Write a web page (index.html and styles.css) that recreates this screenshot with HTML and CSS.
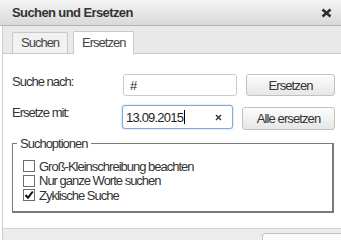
FILE: index.html
```html
<!DOCTYPE html>
<html lang="de">

<head>
  <meta charset="UTF-8">
  <title>Suchen und Ersetzen</title>
  <link rel="stylesheet" href="styles.css">
</head>

<body>

  <div class="dialog">
    <div class="titlebar">
      <span class="title">Suchen und Ersetzen</span>
      <svg class="close" width="11" height="10" viewBox="0 0 11 10">
        <path d="M1.5 1.5 L9.5 8.5 M9.5 1.5 L1.5 8.5" stroke="#2e2e2e" stroke-width="2.6" />
      </svg>
    </div>

    <div class="body">
      <div class="tabs">
        <div class="tab">Suchen</div>
        <div class="tab active">Ersetzen</div>
      </div>

      <div class="content">
        <div class="row">
          <label class="label label-search">Suche nach:</label>
          <div class="field field-search"><span class="value">#</span></div>
          <button class="btn btn-replace">Ersetzen</button>
        </div>

        <div class="row row-second">
          <label class="label label-replace">Ersetze mit:</label>
          <div class="field field-replace focused">
            <span class="value">13.09.2015</span><span class="caret"></span>
            <svg class="clear" width="7" height="7" viewBox="0 0 7 7">
              <path d="M1 1 L6 6 M6 1 L1 6" stroke="#333" stroke-width="1.4" />
            </svg>
          </div>
          <button class="btn btn-all">Alle ersetzen</button>
        </div>

        <fieldset class="options">
          <legend>Suchoptionen</legend>
          <div class="option"><span class="box"></span>Groß-Kleinschreibung beachten</div>
          <div class="option"><span class="box"></span>Nur ganze Worte suchen</div>
          <div class="option">
            <span class="box">
              <svg width="10" height="10" viewBox="0 0 10 10">
                <path d="M1.5 5 L4 7.8 L8.8 1.5" stroke="#111" stroke-width="2" fill="none" />
              </svg>
            </span>Zyklische Suche
          </div>
        </fieldset>
      </div>

      <div class="footer">
        <button class="btn footer-btn"></button>
      </div>
    </div>
  </div>

</body>

</html>
```

FILE: styles.css
```css
* {
  box-sizing: border-box;
  margin: 0;
  padding: 0;
}

body {
  font-family: "Liberation Sans", Arial, sans-serif;
  font-size: 13px;
  line-height: 15px;
  color: #333;
  background: #fff;
  width: 341px;
  height: 240px;
  overflow: hidden;
}

.dialog {
  width: 341px;
  height: 240px;
  display: flex;
  flex-direction: column;
}

.titlebar {
  flex: none;
  height: 26px;
  display: flex;
  align-items: center;
  justify-content: space-between;
  padding: 0 9px 0 12px;
  background: linear-gradient(#f4f4f4, #d9d9d9);
  border-bottom: 1px solid #b3b3b3;
}

.title {
  font-weight: bold;
  letter-spacing: -0.6px;
}

.body {
  flex: 1;
  display: flex;
  flex-direction: column;
  margin-left: 2px;
  border-left: 1px solid #cdcdcd;
}

.tabs {
  flex: none;
  height: 28px;
  display: flex;
  align-items: flex-end;
  gap: 5px;
  padding-left: 9px;
  background: #e9e9e9;
  border-bottom: 1px solid #c8c8c8;
}

.tab {
  height: 21px;
  padding: 2px 8px 0 8px;
  letter-spacing: -1px;
  color: #444;
  background: #f1f1f1;
  border: 1px solid #c9c9c9;
  border-bottom: none;
  border-radius: 2px 2px 0 0;
}

.tab.active {
  height: 23px;
  margin-bottom: -1px;
  padding-top: 3px;
  background: #fff;
}

.content {
  flex: 1;
  padding: 20px 7px 0 9px;
}

.row {
  display: flex;
  align-items: flex-start;
}

.row-second {
  margin-top: 9px;
}

.label {
  flex: none;
  letter-spacing: -1px;
}

.label-search {
  width: 111px;
}

.label-replace {
  width: 110px;
}

.field {
  flex: none;
  display: flex;
  align-items: center;
  padding: 0 4px;
  background: #fff;
  border: 1px solid #cbcbcb;
  border-radius: 3px;
  letter-spacing: -0.8px;
  color: #222;
}

.field-search {
  width: 114px;
  height: 22px;
  padding-left: 6px;
}

.field-replace {
  width: 111px;
  height: 24px;
  padding-left: 3px;
}

.focused {
  border-color: #7fabdc;
  box-shadow: 0 0 2px rgba(90, 150, 215, 0.6);
}

.caret {
  width: 1px;
  height: 14px;
  margin-left: 1px;
  background: #000;
}

.clear {
  margin-left: auto;
  margin-right: 6px;
}

.btn {
  flex: none;
  font-family: inherit;
  font-size: 13px;
  letter-spacing: -0.9px;
  color: #333;
  background: linear-gradient(#fdfdfd, #e6e6e6);
  border: 1px solid #c2c2c2;
  border-radius: 3px;
}

.btn-replace {
  width: 89px;
  height: 22px;
  margin-left: 9px;
}

.btn-all {
  width: 93px;
  height: 23px;
  margin-top: 2px;
  margin-left: 9px;
}

.options {
  width: 322px;
  margin-top: 6px;
  padding: 0 0 8px 4px;
  border: 2px solid #7a7a7a;
  border-width: 1px 2px 2px 1px;
}

.options legend {
  padding: 0 3px;
  letter-spacing: -1px;
  color: #333;
}

.option {
  display: flex;
  align-items: center;
  height: 14.5px;
  margin-left: 6px;
  letter-spacing: -1px;
  color: #333;
}

.options legend + .option {
  margin-top: 8px;
}

.box {
  flex: none;
  width: 12px;
  height: 12px;
  margin-right: 4px;
  display: flex;
  align-items: center;
  justify-content: center;
  background: #fff;
  border: 1px solid #6c6c6c;
}

.footer {
  flex: none;
  height: 12px;
  padding: 4px 0 0 259px;
  background: #ececec;
  border-top: 1px solid #d2d2d2;
  overflow: hidden;
}

.footer-btn {
  width: 90px;
  height: 22px;
  background: #fafafa;
}
```
